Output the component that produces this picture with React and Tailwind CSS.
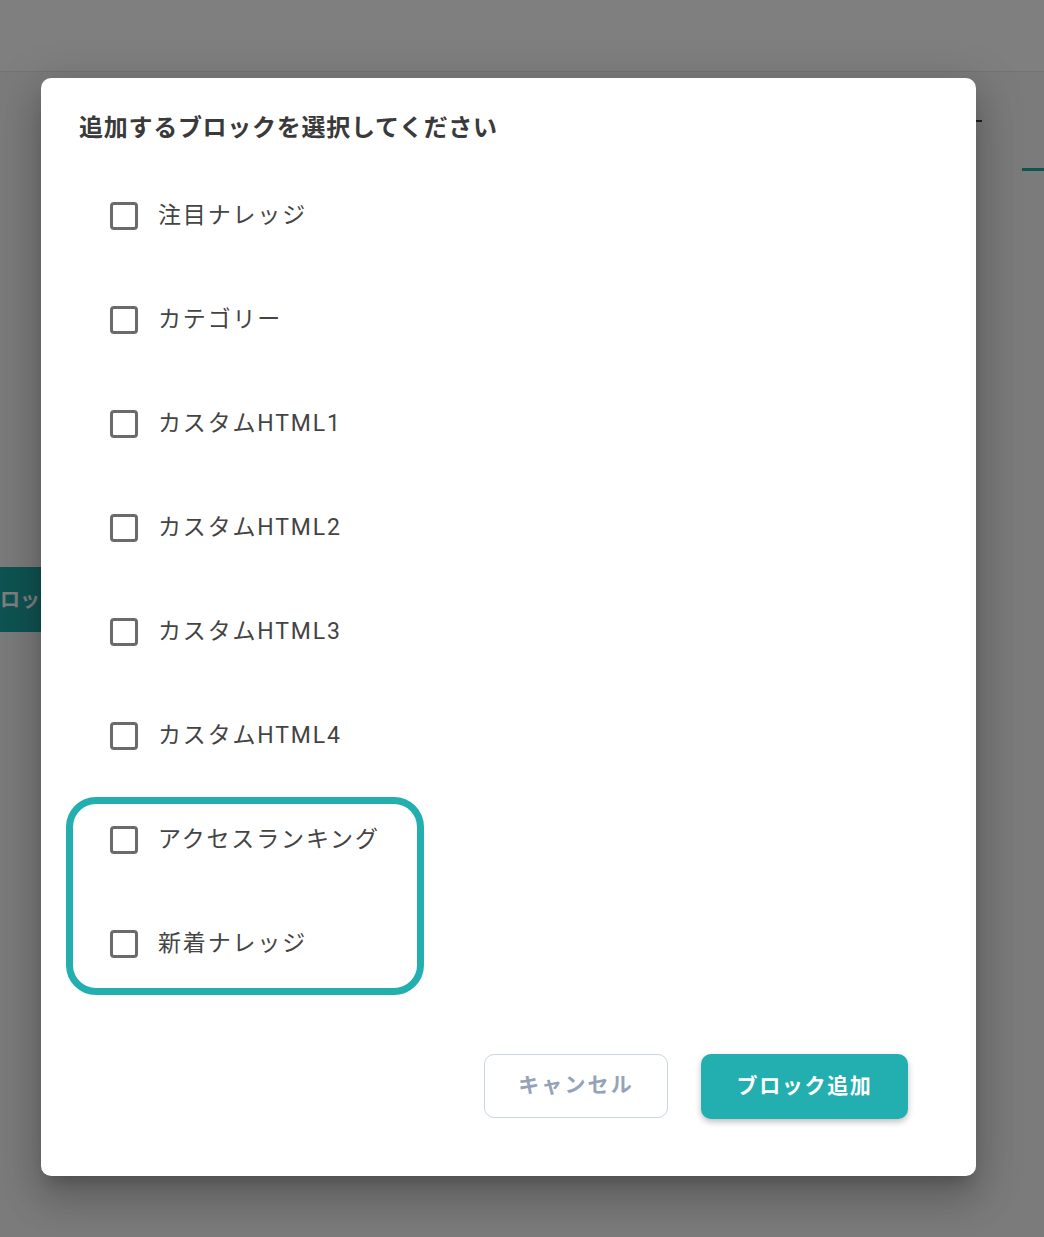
import React, { useState } from 'react';

const font = { fontFamily: "Roboto, 'Noto Sans CJK JP', 'Noto Sans', sans-serif" };

const blocks = [
  '注目ナレッジ',
  'カテゴリー',
  'カスタムHTML1',
  'カスタムHTML2',
  'カスタムHTML3',
  'カスタムHTML4',
  'アクセスランキング',
  '新着ナレッジ',
];

const BlockRow = ({ label, checked, onToggle }) => (
  <label className="flex h-[104px] cursor-pointer items-center pl-[69px]">
    <span className="flex h-[28px] w-[28px] items-center justify-center rounded-[4px] border-[3px] border-[#6b6b6b] bg-white">
      {checked && (
        <svg viewBox="0 0 24 24" className="h-5 w-5" fill="none" stroke="#6b6b6b" strokeWidth={3}>
          <path d="M5 12l5 5 9-10" />
        </svg>
      )}
    </span>
    <input type="checkbox" className="hidden" checked={checked} onChange={onToggle} />
    <span className="ml-[20px] text-[23px] tracking-[0.08em] text-[#444444]">{label}</span>
  </label>
);

const App = () => {
  const [selected, setSelected] = useState([]);

  const toggle = (label) => {
    setSelected(prev => prev.includes(label) ? prev.filter(l => l !== label) : [...prev, label]);
  };

  return (
    <div className="relative h-[1237px] w-[1044px] overflow-hidden bg-[#f4f7f5]" style={font}>
      {/* page behind the dialog */}
      <div className="h-[72px] border-b border-[#e5e7eb] bg-white" />
      <div className="flex justify-end pt-[48px]">
        <div className="mr-[62px] h-[2px] w-[6px] bg-[#374151]" />
      </div>
      <div className="flex justify-end pt-[46px]">
        <div className="h-[3px] w-[22px] bg-[#1fa9a5]" />
      </div>
      <div className="mt-[396px] flex h-[65px] w-[120px] items-center rounded-r-md bg-[#1fa9a5] text-[20px] font-bold text-white">
        ロック
      </div>

      {/* overlay */}
      <div className="absolute inset-0 bg-black/50">
        <div className="pl-[41px] pt-[78px]">
          <div className="flex h-[1098px] w-[935px] flex-col rounded-[10px] bg-white shadow-[0_11px_15px_-7px_rgba(0,0,0,0.2),0_24px_38px_3px_rgba(0,0,0,0.14),0_9px_46px_8px_rgba(0,0,0,0.12)]">
            <h2 className="pl-[38px] pt-[34px] text-[24px] font-bold leading-[32px] tracking-[0.03em] text-[#3a3a3a]">
              追加するブロックを選択してください
            </h2>
            <div className="relative mt-[20px]">
              {blocks.map(label => (
                <BlockRow
                  key={label}
                  label={label}
                  checked={selected.includes(label)}
                  onToggle={() => toggle(label)}
                />
              ))}
              {/* highlight annotation */}
              <div className="pointer-events-none absolute left-[25px] top-[633px] h-[198px] w-[358px] rounded-[30px] border-[7px] border-[#23aeb0]" />
            </div>
            <div className="mt-auto flex justify-end gap-[33px] pb-[57px] pr-[68px]">
              <button className="h-[64px] w-[184px] rounded-[10px] border border-[#cbd5e1] bg-white text-[21px] font-bold tracking-[0.1em] text-[#94a3b8]">
                キャンセル
              </button>
              <button className="h-[65px] w-[207px] rounded-[10px] bg-[#23aeb0] text-[21px] font-bold tracking-[0.08em] text-white shadow-[0_3px_6px_rgba(0,0,0,0.25)]">
                ブロック追加
              </button>
            </div>
          </div>
        </div>
      </div>
    </div>
  );
};

export default App;
